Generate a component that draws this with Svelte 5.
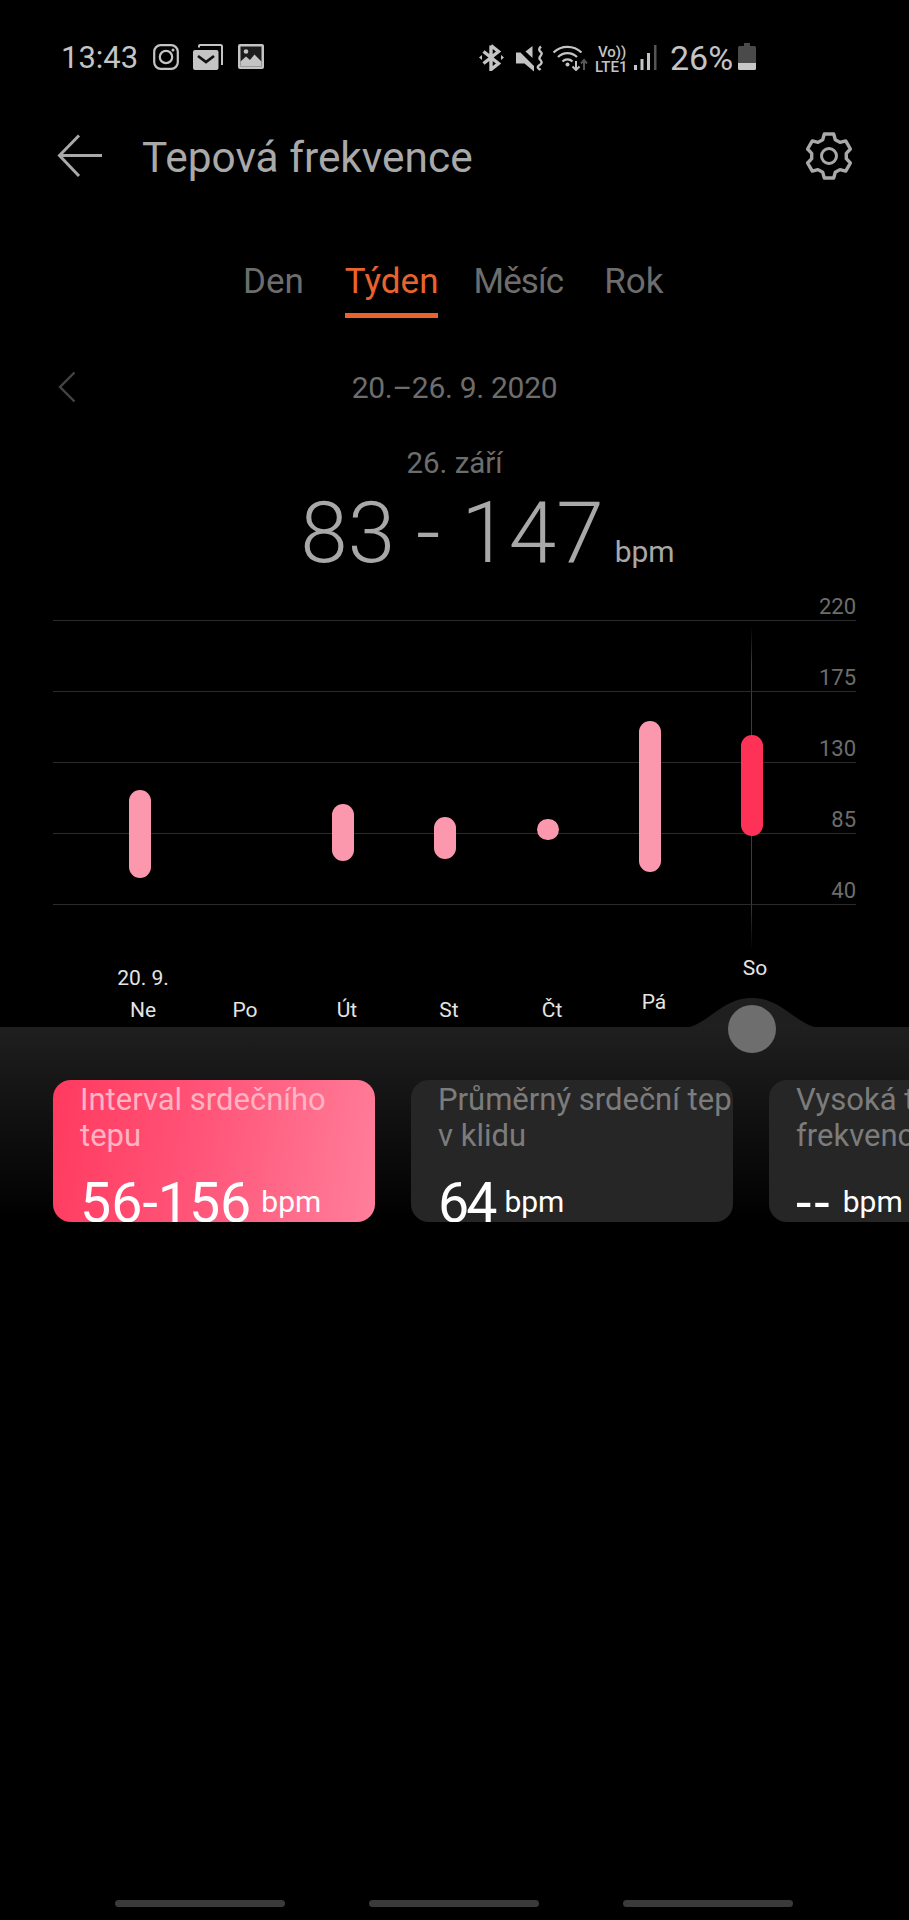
<script>
  const days = [
    { lines: ['20. 9.', 'Ne'], x: 143, top: 962 },
    { lines: ['Po'], x: 245, top: 994 },
    { lines: ['Út'], x: 347, top: 994 },
    { lines: ['St'], x: 449, top: 994 },
    { lines: ['Čt'], x: 552, top: 994 },
    { lines: ['Pá'], x: 654, top: 986 },
    { lines: ['So'], x: 755, top: 952 }
  ];
  const bars = [
    { x: 140, top: 790, bottom: 878 },
    { x: 343, top: 804, bottom: 861 },
    { x: 445, top: 817, bottom: 859 },
    { x: 548, top: 819, bottom: 840 },
    { x: 649.5, top: 721, bottom: 872 },
    { x: 752, top: 735, bottom: 836, active: true }
  ];
  const ticks = [220, 175, 130, 85, 40];
  const tabs = ['Den', 'Týden', 'Měsíc', 'Rok'];
  const cards = [
    { title: 'Interval srdečního tepu', value: '56-156', active: true },
    { title: 'Průměrný srdeční tep v klidu', value: '64', tight: true },
    { title: 'Vysoká tepová frekvence', value: '--', empty: true }
  ];

  function gearPath(cx, cy, R, r) {
    let d = '';
    for (let i = 0; i < 6; i++) {
      const a = -90 + i * 60;
      const pts = [[r, a - 21], [R, a - 12], [R, a + 12], [r, a + 21]];
      pts.forEach(([rad, deg], j) => {
        const t = (deg * Math.PI) / 180;
        const px = (cx + rad * Math.cos(t)).toFixed(1);
        const py = (cy + rad * Math.sin(t)).toFixed(1);
        d += (i === 0 && j === 0 ? 'M' : 'L') + px + ' ' + py + ' ';
      });
    }
    return d + 'Z';
  }
</script>

<div class="page">
  <div class="status">
    <div class="status-left">
      <span class="clock">13:43</span>
      <svg class="ic-insta" viewBox="0 0 26 26" width="26" height="26">
        <rect x="1.2" y="1.2" width="23.600" height="23.600" rx="6.500" fill="none" stroke="#c4c4c4" stroke-width="2.200" />
        <circle cx="13" cy="13" r="6.200" fill="none" stroke="#c4c4c4" stroke-width="2.200" />
        <circle cx="20" cy="6" r="1.500" fill="#c4c4c4" />
      </svg>
      <svg class="ic-mail" viewBox="0 0 30 26" width="30" height="26">
        <path d="M6 3.500V2a1 1 0 0 1 1-1h20.500a1.500 1.500 0 0 1 1.500 1.500V21" fill="none" stroke="#c4c4c4" stroke-width="2" />
        <rect x="0" y="6" width="25.500" height="20" rx="2" fill="#c4c4c4" />
        <path d="M5 12l8 6 8-6" fill="none" stroke="#111" stroke-width="2.800" />
      </svg>
      <svg class="ic-pic" viewBox="0 0 26 25" width="26" height="25">
        <rect width="26" height="25" rx="2" fill="#c4c4c4" />
        <rect x="2.500" y="2.500" width="21" height="20" fill="#1c1c1c" />
        <circle cx="8" cy="7.500" r="2.300" fill="#c4c4c4" />
        <path d="M2.500 17.500l5.500-5 4 3.500 4.500-5.500 7 7v5h-21z" fill="#c4c4c4" />
      </svg>
    </div>
    <div class="status-right">
      <svg class="ic-bt" viewBox="0 0 25 27" width="25" height="27">
        <path d="M12 1.500v24l7.500-6-15-12M12 1.500l7.500 6-15 12" fill="none" stroke="#c4c4c4" stroke-width="3.400" />
        <path d="M0 13.500l3-2.500v5zM25 13.500l-3-2.500v5z" fill="#c4c4c4" />
      </svg>
      <svg class="ic-mute" viewBox="0 0 27 27" width="27" height="27">
        <path d="M0 7.500h4.500L18 21v5.500L8.500 18.500H0z" fill="#c4c4c4" />
        <path d="M9.500 6.500L16.500 1v12z" fill="#c4c4c4" />
        <path d="M25 1.500c-3.500 3-1 4.500.5 6.500s-4 4-1.500 6.500 2 4-1 6 .5 3.500 1.500 4.500" fill="none" stroke="#c4c4c4" stroke-width="2.400" />
      </svg>
      <svg class="ic-wifi" viewBox="0 0 36 28" width="36" height="28">
        <path d="M0.500 9.500a20 20 0 0 1 28 0M5 14a13.500 13.500 0 0 1 19 0M9.500 18.500a7 7 0 0 1 10 0" fill="none" stroke="#c4c4c4" stroke-width="2.300" />
        <circle cx="14.500" cy="21.500" r="2" fill="#c4c4c4" />
        <path d="M23 18v9M19.500 23.500l3.500 3.500 3.500-3.500" fill="none" stroke="#c4c4c4" stroke-width="2" />
        <path d="M31 27v-9M28 20.500l3-3.500 3 3.500" fill="none" stroke="#555" stroke-width="2" />
      </svg>
      <div class="volte"><span>Vo))</span><span>LTE1</span></div>
      <svg class="ic-signal" viewBox="0 0 23 26" width="23" height="26">
        <rect x="0" y="20" width="3" height="5" fill="#c4c4c4" />
        <rect x="6.500" y="14" width="3" height="11" fill="#c4c4c4" />
        <rect x="13" y="8" width="3" height="17" fill="#c4c4c4" />
        <rect x="20" y="0" width="2.500" height="25" fill="#555" />
      </svg>
      <span class="battery-text">26%</span>
      <svg class="ic-batt" viewBox="0 0 18 27" width="18" height="27">
        <path d="M6 0h6v3h4.500a1.500 1.500 0 0 1 1.500 1.500V20H0V4.500A1.500 1.500 0 0 1 1.500 3H6z" fill="#4a4a4a" />
        <path d="M0 20h18v5.500a1.500 1.500 0 0 1-1.500 1.500h-15A1.500 1.500 0 0 1 0 25.500z" fill="#c8c8c8" />
      </svg>
    </div>
  </div>

  <header class="header">
    <svg class="back" viewBox="0 0 46 44" width="46" height="44">
      <path d="M45 21.500H3M22 1.500L2.500 21.500 22 42" fill="none" stroke="#a9a9a9" stroke-width="3" />
    </svg>
    <h1>Tepová frekvence</h1>
    <svg class="gear" viewBox="0 0 50 50" width="50" height="50">
      <path d={gearPath(25, 25, 22.500, 17.500)} fill="none" stroke="#a9a9a9" stroke-width="3.400" stroke-linejoin="round" />
      <circle cx="25" cy="25" r="7.500" fill="none" stroke="#a9a9a9" stroke-width="3" />
    </svg>
  </header>

  <nav class="tabs">
    {#each tabs as tab, i}
      <span class="tab" class:on={i === 1}>{tab}</span>
    {/each}
  </nav>

  <div class="range">
    <svg class="chev" viewBox="0 0 18 32" width="18" height="32">
      <path d="M16.500 1.500L2 16l14.500 14.500" fill="none" stroke="#444" stroke-width="2.400" />
    </svg>
    <span>20.–26. 9. 2020</span>
  </div>

  <div class="day">26. září</div>
  <div class="reading"><span class="big">83 - 147</span><span class="unit">bpm</span></div>

  <section class="chart">
    <div class="cursor"></div>
    {#each ticks as t, i}
      <div class="grid" style="top:{i * 71 + 30}px"></div>
      <span class="tick" style="top:{i * 71 + 4}px">{t}</span>
    {/each}
    {#each bars as b}
      <div class="bar" class:active={b.active} style="left:{b.x - 11}px;top:{b.top - 590}px;height:{b.bottom - b.top}px"></div>
    {/each}
    {#each days as d}
      <div class="xlabel" style="left:{d.x}px;top:{d.top - 590}px">
        {#each d.lines as l}<div>{l}</div>{/each}
      </div>
    {/each}
  </section>

  <section class="panel">
    <svg class="bump" viewBox="0 0 160 32" width="160" height="32">
      <path d="M0 32C36 32 46 0 80 0S124 32 160 32z" fill="#1f1f1f" />
    </svg>
    <div class="knob"></div>
    <div class="cards">
      {#each cards as c}
        <article class="card" class:active={c.active}>
          <p class="title">{c.title}</p>
          <p class="value"><span class="num" class:dash={c.empty} class:tight={c.tight}>{c.value}</span><span class="u">bpm</span></p>
        </article>
      {/each}
    </div>
  </section>

  <div class="nav">
    <i></i><i></i><i></i>
  </div>
</div>

<style>
  :global(body) { margin: 0; background: #000; }
  .page {
    width: 909px; height: 1920px; background: #000; overflow: hidden;
    display: flex; flex-direction: column; position: relative;
    font-family: Roboto, "Noto Sans", sans-serif; font-weight: 400;
  }
  svg { display: block; flex: none; }

  .status { height: 116px; padding: 41px 0 0 61px; box-sizing: border-box; display: flex; justify-content: space-between; flex: none; }
  .status-left, .status-right { display: flex; align-items: flex-start; height: 34px; }
  .clock { font-size: 31px; line-height: 34px; color: #c4c4c4; width: 92px; }
  .ic-insta { margin-top: 3px; }
  .ic-mail { margin: 3px 0 0 14px; }
  .ic-pic { margin: 3px 0 0 15px; }
  .status-right { width: 430px; }
  .ic-bt { margin-top: 3px; }
  .ic-mute { margin: 4px 0 0 12px; }
  .ic-wifi { margin: 2px 0 0 10px; }
  .volte { margin: 4px 0 0 6px; width: 33px; display: flex; flex-direction: column; color: #c4c4c4; font-size: 15px; line-height: 14.500px; font-weight: 500; }
  .volte span:first-child { padding-left: 3px; }
  .ic-signal { margin: 4px 0 0 6px; }
  .battery-text { margin-left: 13px; width: 68px; font-size: 34px; line-height: 34px; color: #c4c4c4; }
  .ic-batt { margin-top: 2px; }

  .header { height: 80px; flex: none; display: flex; align-items: center; padding: 0 57px; color: #a9a9a9; }
  .header h1 { margin: 0 0 0 39px; padding-top: 4px; flex: 1; font-size: 42.400px; font-weight: 400; line-height: 48px; color: #a9a9a9; }
  .gear { margin-right: -1.500px; }

  .tabs { flex: none; display: flex; padding: 64px 0 0 243px; font-size: 35px; color: #6d6d6d; line-height: 44px; }
  .tab { height: 44px; }
  .tab:nth-child(2) { margin-left: 41px; }
  .tab:nth-child(3) { margin-left: 35px; letter-spacing: -0.900px; }
  .tab:nth-child(4) { margin-left: 41px; }
  .tab.on { color: #e8642c; padding-bottom: 9px; border-bottom: 5px solid #e8642c; }

  .range { flex: none; height: 40px; margin-top: 49px; position: relative; display: flex; align-items: center; justify-content: center; font-size: 30px; letter-spacing: -0.300px; color: #6d6d6d; }
  .chev { position: absolute; left: 58px; top: 4px; }

  .day { flex: none; text-align: center; font-size: 29.500px; color: #6d6d6d; line-height: 36px; margin-top: 38px; }
  .reading { flex: none; display: flex; justify-content: center; align-items: baseline; color: #a8a8a8; line-height: 96px; height: 96px; margin: 4px 0 0 66px; }
  .big { font-size: 85.500px; font-weight: 300; }
  .unit { font-size: 30px; margin-left: 11px; }

  .chart { position: absolute; left: 0; top: 590px; width: 909px; height: 437px; }
  .grid { position: absolute; left: 53px; width: 803px; height: 1px; background: #2b2b2b; }
  .tick { position: absolute; right: 53px; font-size: 22px; line-height: 26px; color: #6d6d6d; }
  .cursor { position: absolute; left: 751px; top: 36px; width: 1px; height: 324px; background: linear-gradient(#3d0e1900, #7d1d33 12%, #7d1d33 85%, #3d0e1900); }
  .bar { position: absolute; width: 22px; border-radius: 11px; background: #fb98ae; }
  .bar.active { background: #fe3157; }
  .xlabel { position: absolute; transform: translateX(-50%); font-size: 21px; line-height: 32px; color: #e4e4e4; text-align: center; white-space: nowrap; }

  .panel { position: absolute; left: 0; top: 1027px; width: 909px; height: 195px; background: linear-gradient(#1f1f1f, #000); }
  .bump { position: absolute; left: 672px; top: -29px; }
  .knob { position: absolute; left: 728px; top: -22px; width: 48px; height: 48px; border-radius: 50%; background: #6e6e6e; }
  .cards { display: flex; gap: 36px; padding: 53px 0 0 53px; width: 1300px; }
  .card { flex: none; width: 322px; height: 142px; box-sizing: border-box; padding: 2px 0 0 27px; border-radius: 18px; background: #262626; overflow: hidden; color: #7c7c7c; }
  .card.active { background: linear-gradient(100deg, #ff3a5f 0%, #ff5478 45%, #ff7f9b 100%); color: #ffb4c4; }
  .title { margin: 0; font-size: 31px; line-height: 36px; }
  .value { margin: 22px 0 0; color: #fff; display: flex; align-items: flex-start; white-space: nowrap; }
  .num { font-size: 55.500px; line-height: 56px; }
  .num.dash { letter-spacing: 3px; }
  .num.tight { letter-spacing: -3px; }
  .u { font-size: 30px; line-height: 36px; margin: 8px 0 0 10px; }

  .nav { position: absolute; left: 115px; top: 1900px; display: flex; gap: 84px; }
  .nav i { width: 170px; height: 7px; border-radius: 4px; background: #3a3a3a; }
</style>
